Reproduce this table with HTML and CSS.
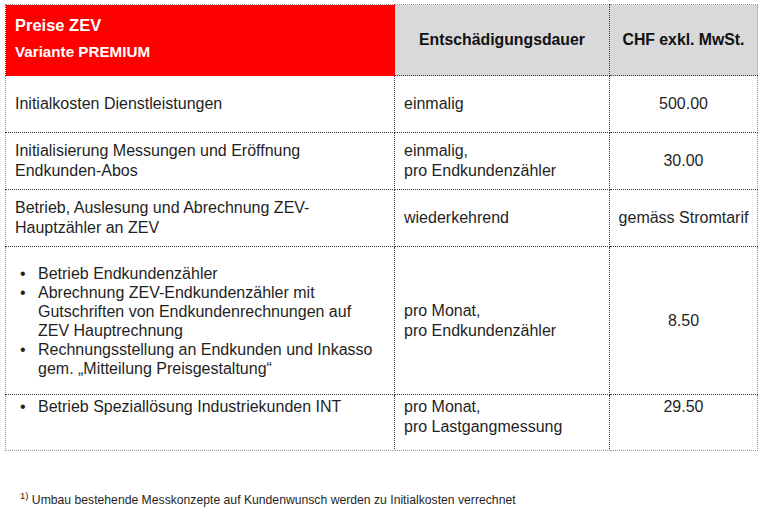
FILE: index.html
```html
<!DOCTYPE html>
<html lang="de">
<head>
<meta charset="utf-8">
<title>Preise ZEV</title>
<link rel="stylesheet" href="styles.css">
</head>
<body>
<table class="prices">
  <colgroup>
    <col class="c1">
    <col class="c2">
    <col class="c3">
  </colgroup>
  <thead>
    <tr class="head">
      <th class="title">
        <div class="t1">Preise ZEV</div>
        <div class="t2">Variante PREMIUM</div>
      </th>
      <th class="gray">Entschädigungsdauer</th>
      <th class="gray">CHF exkl. MwSt.</th>
    </tr>
  </thead>
  <tbody>
    <tr class="r1">
      <td>Initialkosten Dienstleistungen</td>
      <td>einmalig</td>
      <td class="num">500.00</td>
    </tr>
    <tr class="r2">
      <td>Initialisierung Messungen und Eröffnung<br>Endkunden-Abos</td>
      <td>einmalig,<br>pro Endkundenzähler</td>
      <td class="num">30.00</td>
    </tr>
    <tr class="r3">
      <td>Betrieb, Auslesung und Abrechnung ZEV-Hauptzähler an ZEV</td>
      <td>wiederkehrend</td>
      <td class="num">gemäss Stromtarif</td>
    </tr>
    <tr class="r4">
      <td>
        <ul class="bullets">
          <li>Betrieb Endkundenzähler</li>
          <li>Abrechnung ZEV-Endkundenzähler mit Gutschriften von Endkundenrechnungen auf ZEV Hauptrechnung</li>
          <li>Rechnungsstellung an Endkunden und Inkasso gem. „Mitteilung Preisgestaltung“</li>
        </ul>
      </td>
      <td>pro Monat,<br>pro Endkundenzähler</td>
      <td class="num">8.50</td>
    </tr>
    <tr class="r5">
      <td>
        <ul class="bullets">
          <li>Betrieb Speziallösung Industriekunden INT</li>
        </ul>
      </td>
      <td>pro Monat,<br>pro Lastgangmessung</td>
      <td class="num">29.50</td>
    </tr>
  </tbody>
</table>
<p class="footnote"><sup>1)</sup> Umbau bestehende Messkonzepte auf Kundenwunsch werden zu Initialkosten verrechnet</p>
</body>
</html>
```

FILE: styles.css
```css
html, body {
  margin: 0;
  padding: 0;
  background: #ffffff;
}

body {
  font-family: "Liberation Sans", Arial, sans-serif;
  color: #1f1f1f;
}

.prices {
  margin: 4px 0 0 5px;
  border-collapse: collapse;
  table-layout: fixed;
  width: 752px;
  font-size: 16px;
  line-height: 20px;
  border: 1px dotted #9a9a9a;
}

.c1 { width: 389px; }
.c2 { width: 215px; }
.c3 { width: 148px; }

.prices th,
.prices td {
  border: 1px dotted #3a3a3a;
  padding: 0 0 0 9px;
  vertical-align: middle;
  text-align: left;
  font-weight: normal;
}

.prices tr:first-child th { border-top-color: #9a9a9a; }
.prices th:first-child,
.prices td:first-child { border-left-color: #9a9a9a; padding-left: 9px; padding-right: 10px; }
.prices th:last-child,
.prices td:last-child { border-right-color: #9a9a9a; }
.prices tbody tr:last-child td { border-bottom-color: #9a9a9a; }

.head { height: 71px; }

.prices th.title {
  background: #ff0000;
  color: #ffffff;
  vertical-align: top;
  font-weight: bold;
  border-color: #ff0000;
  padding-top: 9px;
}

.t1 {
  font-size: 16.5px;
  line-height: 22px;
}

.t2 {
  font-size: 15.2px;
  line-height: 20px;
  margin-top: 6px;
}

.prices th.gray {
  background: #d9d9d9;
  font-weight: bold;
  font-size: 15.8px;
  text-align: center;
  color: #111111;
  padding: 0;
}

.r1 { height: 57px; }
.r2 { height: 57px; }
.r3 { height: 57px; }
.r4 { height: 148px; }
.r5 { height: 56px; }

.prices td.num {
  text-align: center;
  padding: 0;
}

.r5 td {
  vertical-align: top;
  padding-top: 2px;
}

.r5 td.num { padding-top: 2px; }

.bullets {
  list-style: none;
  margin: 0;
  padding: 0 0 0 5px;
}

.bullets li {
  position: relative;
  padding-left: 18px;
  line-height: 19px;
}

.bullets li::before {
  content: "•";
  position: absolute;
  left: 0;
  top: 0;
}

.footnote {
  margin: 42px 0 0 20px;
  font-size: 12.2px;
  line-height: 14px;
  color: #1f1f1f;
}

.footnote sup {
  font-size: 9.5px;
  vertical-align: 5px;
  line-height: 0;
}
```
